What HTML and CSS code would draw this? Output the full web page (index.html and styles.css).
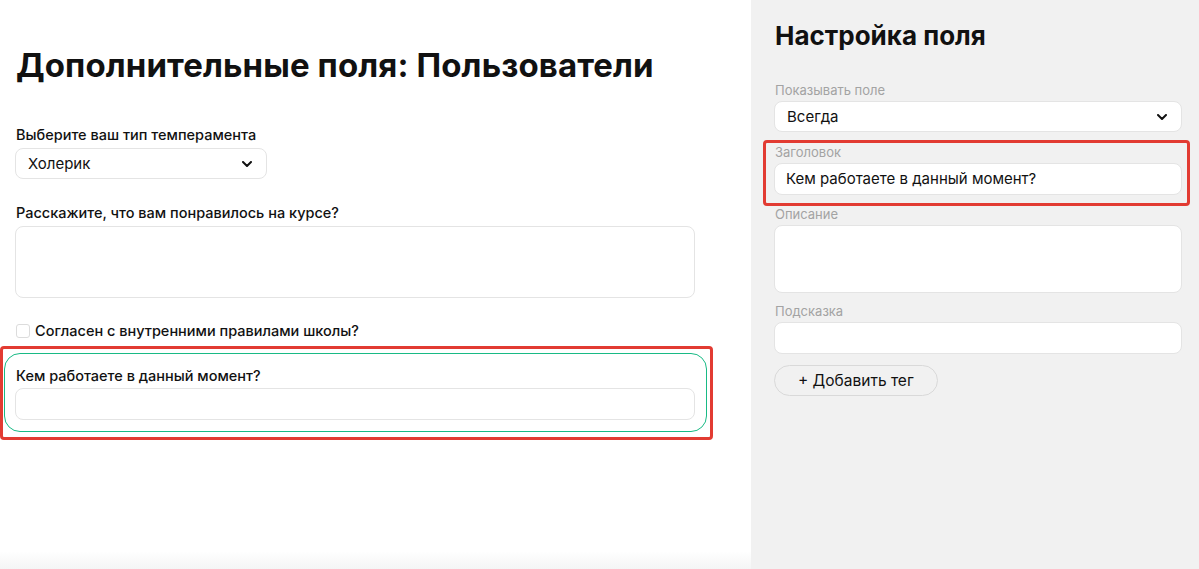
FILE: index.html
```html
<!DOCTYPE html>
<html lang="ru">
<head>
    <meta charset="UTF-8">
    <meta name="viewport" content="width=device-width, initial-scale=1.0">
    <title>Дополнительные поля</title>
    <link rel="stylesheet" href="styles.css">
</head>
<body>
    <div class="layout">
        <main class="preview">
            <h1 class="title">Дополнительные поля: Пользователи</h1>

            <div class="field">
                <label class="field-label">Выберите ваш тип темперамента</label>
                <div class="select select-small">
                    <span>Холерик</span>
                    <svg class="chevron" width="10" height="6" viewBox="0 0 10 6"><polyline points="1,1 5,5 9,1" fill="none" stroke="#111" stroke-width="2" stroke-linecap="round" stroke-linejoin="round"/></svg>
                </div>
            </div>

            <div class="field">
                <label class="field-label">Расскажите, что вам понравилось на курсе?</label>
                <div class="textarea"></div>
            </div>

            <label class="check">
                <span class="check-box"></span>
                <span>Согласен с внутренними правилами школы?</span>
            </label>

            <div class="highlight highlight-left">
                <div class="field-active">
                    <label class="field-label">Кем работаете в данный момент?</label>
                    <div class="input"></div>
                </div>
            </div>
        </main>

        <aside class="settings">
            <h2 class="settings-title">Настройка поля</h2>

            <div class="setting">
                <label class="setting-label">Показывать поле</label>
                <div class="select">
                    <span>Всегда</span>
                    <svg class="chevron" width="10" height="6" viewBox="0 0 10 6"><polyline points="1,1 5,5 9,1" fill="none" stroke="#111" stroke-width="2" stroke-linecap="round" stroke-linejoin="round"/></svg>
                </div>
            </div>

            <div class="highlight highlight-right">
                <label class="setting-label">Заголовок</label>
                <div class="input input-filled">Кем работаете в данный момент?</div>
            </div>

            <div class="setting setting-desc">
                <label class="setting-label">Описание</label>
                <div class="textarea textarea-short"></div>
            </div>

            <div class="setting">
                <label class="setting-label">Подсказка</label>
                <div class="input"></div>
            </div>

            <button class="tag-button">+ Добавить тег</button>
        </aside>
    </div>
</body>
</html>
```

FILE: styles.css
```css
body {
    margin: 0;
    font-family: Inter, "Noto Sans", sans-serif;
    color: #111;
    background-color: #f1f1f1;
}

.layout {
    display: flex;
    height: 569px;
    overflow: hidden;
}

/* left: form preview */
.preview {
    width: 751px;
    box-sizing: border-box;
    padding: 45px 56px 0 15px;
    background: linear-gradient(to bottom, #ffffff calc(100% - 18px), #f4f5f5);
}

.title {
    margin: 0 0 40px 1px;
    font-size: 33px;
    font-weight: 700;
    letter-spacing: 0.1px;
    line-height: 40px;
}

.field {
    margin-bottom: 24px;
}

.field-label {
    display: block;
    margin: 0 0 4px 1px;
    font-size: 14.5px;
    font-weight: 500;
    line-height: 19px;
}

.select {
    display: flex;
    align-items: center;
    justify-content: space-between;
    height: 31px;
    box-sizing: border-box;
    padding: 0 14px 0 12px;
    background-color: #ffffff;
    border: 1px solid #e4e4e4;
    border-radius: 8px;
    font-size: 15px;
}

.select-small {
    width: 252px;
}

.textarea {
    height: 72px;
    box-sizing: border-box;
    background-color: #ffffff;
    border: 1px solid #e4e4e4;
    border-radius: 8px;
}

.textarea-short {
    height: 68px;
}

.input {
    height: 32px;
    box-sizing: border-box;
    padding: 0 11px;
    background-color: #ffffff;
    border: 1px solid #e4e4e4;
    border-radius: 8px;
    font-size: 15px;
    line-height: 30px;
}

.check {
    display: flex;
    align-items: center;
    gap: 5px;
    margin: 0 0 7px 1px;
    font-size: 14.5px;
    font-weight: 500;
}

.check-box {
    width: 14px;
    height: 14px;
    box-sizing: border-box;
    border: 1px solid #dcdcdc;
    border-radius: 3px;
}

/* annotation frames */
.highlight {
    border: 3px solid #e23b32;
    border-radius: 4px;
}

.highlight-left {
    width: 713px;
    box-sizing: border-box;
    margin-left: -15px;
    padding: 4px 3px 5px 1px;
}

.field-active {
    padding: 12px 11px 11px 10px;
    border: 1.5px solid #18ba85;
    border-radius: 16px;
}

.field-active .field-label {
    margin-bottom: 3px;
}

/* right: settings */
.settings {
    flex: 1;
    padding: 20px 17px 0 23px;
    background-color: #f1f1f1;
}

.settings-title {
    margin: 0 0 30px 1px;
    font-size: 26px;
    font-weight: 700;
    line-height: 32px;
}

.setting {
    margin-bottom: 8px;
}

.setting-desc {
    margin-bottom: 10px;
}

.setting-label {
    display: block;
    margin: 0 0 3px 1px;
    font-size: 13px;
    color: #a3a3a3;
    line-height: 16px;
}

.highlight-right {
    margin: 0 -8px 0 -11px;
    padding: 0 5px 8px 8px;
}

.highlight-right .setting-label {
    margin-top: 1px;
}

.input-filled {
    color: #111;
}

.tag-button {
    display: block;
    margin-top: 11px;
    height: 31px;
    padding: 0 23px;
    background-color: #f1f1f1;
    border: 1px solid #d9d9d9;
    border-radius: 16px;
    font-family: inherit;
    font-size: 15.5px;
    color: #111;
}
```
